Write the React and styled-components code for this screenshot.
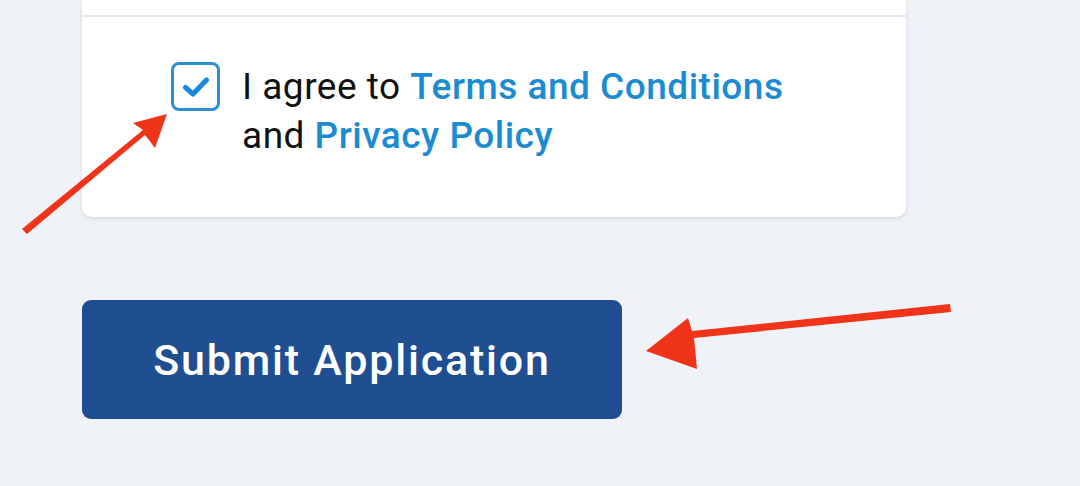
import styled, { createGlobalStyle } from 'styled-components'

const GlobalStyle = createGlobalStyle`
  html, body {
    margin: 0;
    padding: 0;
    background: #eff3f7;
    font-family: Roboto, "Noto Sans", Arial, sans-serif;
  }
`

const Page = styled.div`
  position: relative;
  width: 1080px;
  height: 486px;
  overflow: hidden;
  background: #eff3f7;
  padding: 0 174px 0 82px;
  box-sizing: border-box;
`

const Card = styled.div`
  background: #fff;
  border-radius: 0 0 10px 10px;
  box-shadow: 0 2px 4px rgba(30, 50, 80, 0.12);
`

const TopStrip = styled.div`
  height: 15px;
  border-bottom: 2px solid #e6e9ee;
`

const AgreeRow = styled.label`
  display: flex;
  align-items: flex-start;
  gap: 22px;
  padding: 45px 0 0 89px;
  height: 200px;
  box-sizing: border-box;
`

const Box = styled.span`
  flex: none;
  width: 49px;
  height: 49px;
  box-sizing: border-box;
  border: 3px solid #2a8fd3;
  border-radius: 8px;
  display: flex;
  align-items: center;
  justify-content: center;
`

const AgreeText = styled.span`
  font-size: 37px;
  line-height: 49px;
  color: #111;
  letter-spacing: 0.5px;
`

const Link = styled.a`
  color: #1b8bd2;
  text-decoration: none;
  font-weight: 500;
`

const Submit = styled.button`
  margin-top: 83px;
  width: 540px;
  height: 119px;
  border: none;
  border-radius: 9px;
  background: #1f4e91;
  color: #fff;
  font-family: Roboto, Arial, sans-serif;
  font-size: 43px;
  font-weight: 500;
  letter-spacing: 1.8px;
  padding: 0;
`

const Overlay = styled.svg`
  position: absolute;
  left: 0;
  top: 0;
  pointer-events: none;
`

export default function App() {
  return (
    <>
      <GlobalStyle />
      <Page>
        <Card>
          <TopStrip />
          <AgreeRow>
            <Box>
              <svg width="28" height="22" viewBox="0 0 28 22">
                <path d="M3.5 11.5 L11 18 L24.5 4" fill="none" stroke="#1a88d8" strokeWidth="5" strokeLinecap="round" strokeLinejoin="round" />
              </svg>
            </Box>
            <AgreeText>
              I agree to <Link href="#">Terms and Conditions</Link>
              <br />
              and <Link href="#">Privacy Policy</Link>
            </AgreeText>
          </AgreeRow>
        </Card>
        <Submit>Submit Application</Submit>
        <Overlay width="1080" height="486" viewBox="0 0 1080 486">
          <path d="M22 229 L27 234 L145 135 L155 148 L167 114 L133 123 L143 130 Z" fill="#f0341a" />
          <path d="M950 304 L951 312 L694 338 L697 369 L646 351 L688 318 L692 331 Z" fill="#f0341a" />
        </Overlay>
      </Page>
    </>
  )
}
